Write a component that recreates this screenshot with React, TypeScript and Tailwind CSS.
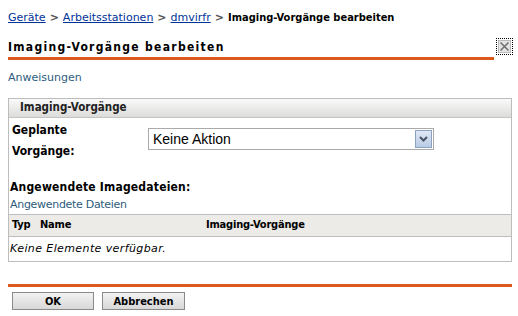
import React from 'react'

const bold = "font-['DejaVu_Sans_Condensed','DejaVu_Sans',Verdana,sans-serif] font-bold"
const reg = "font-['DejaVu_Sans',Verdana,sans-serif]"

function Crumbs() {
  return (
    <div className={`${reg} flex items-center gap-[4px] text-[11px] leading-[14px] h-[14px] mt-[10px] px-[8px]`}>
      <a className="text-[#003399] underline">Geräte</a>
      <span className="text-[#555] font-bold">&gt;</span>
      <a className="text-[#003399] underline">Arbeitsstationen</a>
      <span className="text-[#555] font-bold">&gt;</span>
      <a className="text-[#003399] underline">dmvirfr</a>
      <span className="text-[#555] font-bold">&gt;</span>
      <span className={`${bold} text-black`}>Imaging-Vorgänge bearbeiten</span>
    </div>
  )
}

function CloseBtn() {
  return (
    <div className="w-[17px] h-[17px] border border-dotted border-black p-px">
      <div className="w-full h-full bg-[#e4e4e4] border border-[#bbb] flex items-center justify-center">
        <svg width="11" height="11" viewBox="0 0 11 11">
          <path d="M1.5 1.5 L9.5 9.5 M9.5 1.5 L1.5 9.5" stroke="#707070" strokeWidth="1.6" />
        </svg>
      </div>
    </div>
  )
}

function Select() {
  return (
    <div className="w-[286px] h-[22px] border border-[#aaa] bg-white flex items-center justify-between pl-[4px] pr-px">
      <span className="font-['Liberation_Sans',Arial,sans-serif] text-[14px] leading-[16px] text-black">Keine Aktion</span>
      <div className="w-[17px] h-[18px] border border-[#8da2c0] bg-gradient-to-b from-[#dfe8f5] to-[#b9cbe6] flex items-center justify-center">
        <svg width="9" height="6" viewBox="0 0 9 6">
          <path d="M1 1 L4.5 4.5 L8 1" stroke="#4a5463" strokeWidth="2" fill="none" />
        </svg>
      </div>
    </div>
  )
}

export default function App() {
  return (
    <div className={`${reg} w-[518px] h-[316px] bg-white text-black overflow-hidden pt-px`}>
      <Crumbs />

      <div className="flex items-end pl-[8px] pr-[5px] mt-[13px]">
        <div className="flex-1 border-b-[3px] border-[#dc5a1e] pb-px">
          <div className={`${bold} h-[18px] leading-[18px] text-[12px] tracking-[1.3px]`}>Imaging-Vorgänge bearbeiten</div>
        </div>
        <div className="pb-[5px] pl-[2px]">
          <CloseBtn />
        </div>
      </div>

      <div className="px-[8px] mt-[11px] h-[14px] leading-[14px] text-[11px] text-[#2d5c7d]">Anweisungen</div>

      <div className="ml-[8px] mr-[6px] mt-[13px] border border-[#bdbdbd]">
        <div className="h-[19px] bg-gradient-to-b from-[#fafafa] to-[#dcdcda] border-b border-[#c4c4c4] pl-[11px] flex items-center">
          <span className={`${bold} text-[11.5px] text-[#222]`}>Imaging-Vorgänge</span>
        </div>

        <div className="flex pt-[2px] pl-[3px]">
          <div className={`${bold} w-[136px] text-[12px] leading-[21px]`}>
            Geplante<br />Vorgänge:
          </div>
          <div className="pt-[8px]">
            <Select />
          </div>
        </div>

        <div className={`${bold} mt-[17px] pl-px text-[12px] tracking-[0.2px] leading-[16px]`}>Angewendete Imagedateien:</div>
        <div className="mt-[2px] pl-px text-[11px] tracking-[-0.3px] text-[#2d5c7d] leading-[16px]">Angewendete Dateien</div>

        <div className={`${bold} mt-px h-[23px] bg-[#ecebe8] border-y border-[#bdbdbd] flex items-center text-[11px] tracking-[-0.2px]`}>
          <span className="pl-[3px] w-[31px]">Typ</span>
          <span className="w-[166px]">Name</span>
          <span>Imaging-Vorgänge</span>
        </div>
        <div className="h-[24px] flex items-center pl-px text-[11px] tracking-[0.4px] italic">Keine Elemente verfügbar.</div>
      </div>

      <div className="ml-[8px] mr-[6px] mt-[22px] border-t-[3px] border-[#dc5a1e]" />

      <div className={`${bold} flex gap-[8px] pl-[12px] mt-[5px]`}>
        <button className="w-[82px] h-[18px] border border-[#8a8a8a] bg-gradient-to-b from-[#f2f2f2] to-[#d8d8d8] text-[11px] font-bold leading-none">OK</button>
        <button className="w-[83px] h-[18px] border border-[#8a8a8a] bg-gradient-to-b from-[#f2f2f2] to-[#d8d8d8] text-[11px] font-bold leading-none">Abbrechen</button>
      </div>
    </div>
  )
}
